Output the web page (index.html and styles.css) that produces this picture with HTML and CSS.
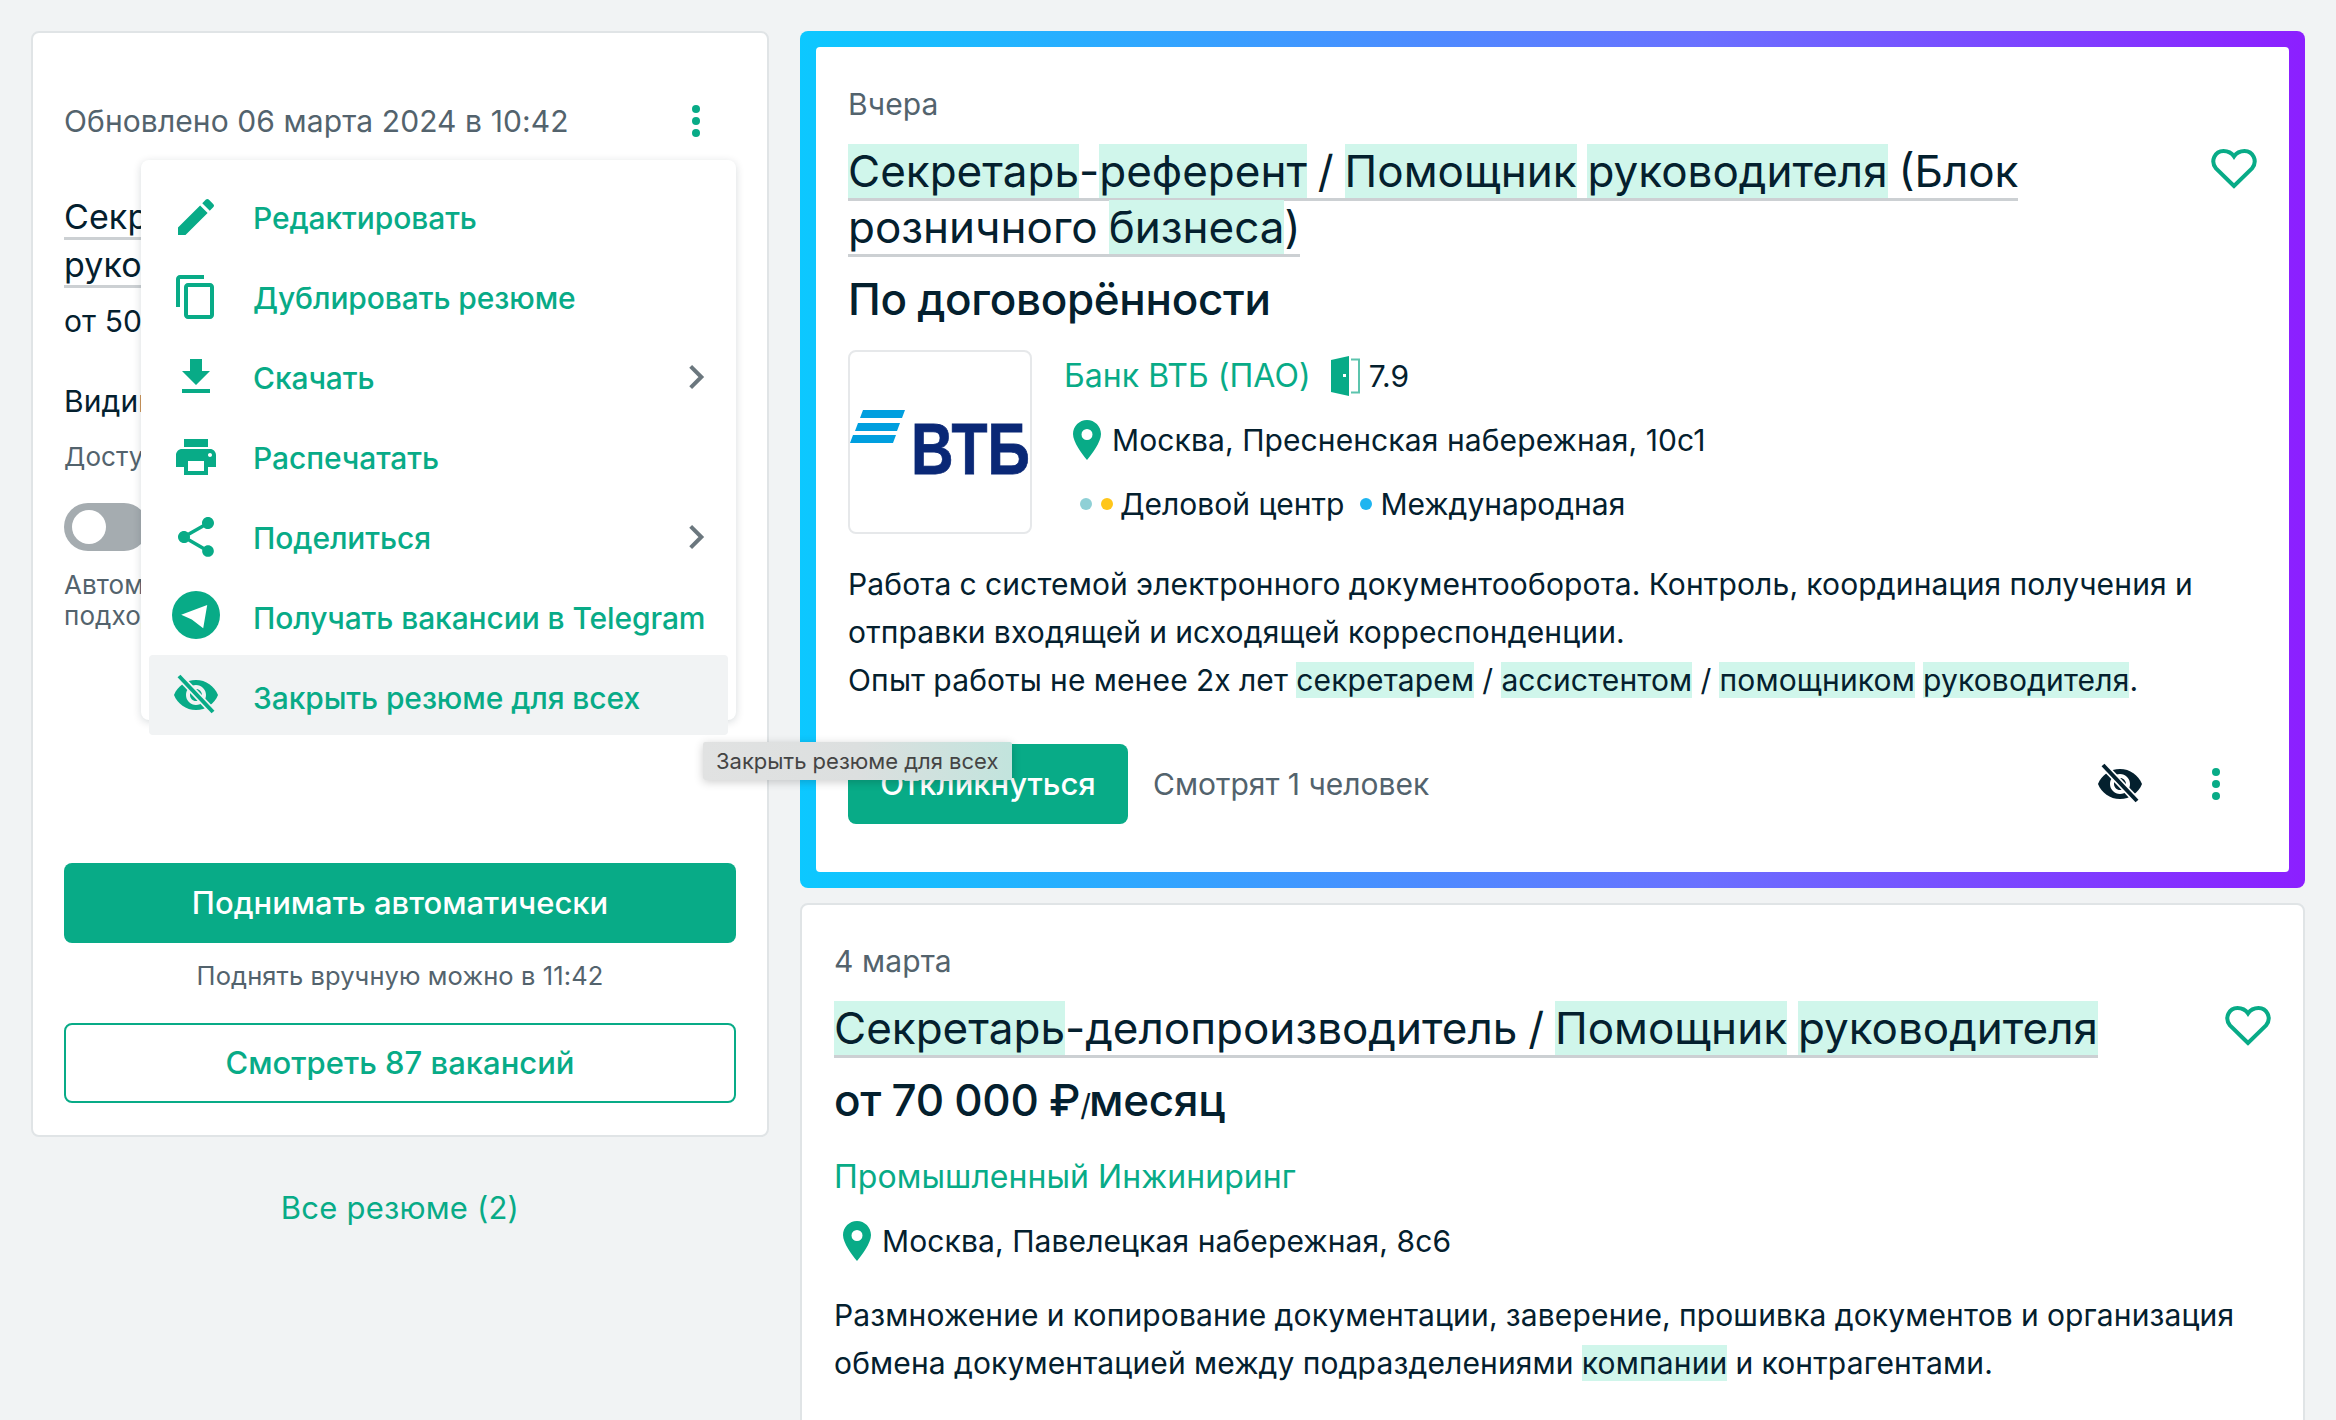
FILE: index.html
```html
<!DOCTYPE html>
<html lang="ru">
<head>
<meta charset="UTF-8">
<title>Вакансии</title>
<link rel="stylesheet" href="styles.css">
</head>
<body>
<div class="page">
    <div class="side">
        <div class="card resume">
            <div class="updated">
                <span>Обновлено 06 марта 2024 в 10:42</span>
                <svg class="dots" viewBox="0 0 8 32"><circle cx="4" cy="4" r="4"/><circle cx="4" cy="16" r="4"/><circle cx="4" cy="28" r="4"/></svg>
            </div>
            <a class="resume-title"><u>Секретарь-референт / Помощник</u> <u>руководителя</u></a>
            <div class="resume-salary">от 50 000 ₽/месяц</div>
            <div class="resume-vis">Видимость резюме</div>
            <div class="resume-note">Доступно всем</div>
            <div class="toggle"><i></i></div>
            <div class="resume-auto">Автоматически поднимать<br>подходящие резюме</div>
            <a class="btn btn-fill">Поднимать автоматически</a>
            <div class="raise-note">Поднять вручную можно в 11:42</div>
            <a class="btn btn-line">Смотреть 87 вакансий</a>

            <ul class="menu">
                <li>
                    <svg viewBox="0 0 24 24"><path d="M3 17.25V21h3.75L17.81 9.94l-3.75-3.75L3 17.25zM20.71 7.04a1 1 0 000-1.41l-2.34-2.34a1 1 0 00-1.41 0l-1.83 1.83 3.75 3.75 1.83-1.83z"/></svg>
                    <span>Редактировать</span>
                </li>
                <li>
                    <svg viewBox="0 0 24 24"><path d="M16 1H4c-1.1 0-2 .9-2 2v14h2V3h12V1zm3 4H8c-1.1 0-2 .9-2 2v14c0 1.1.9 2 2 2h11c1.1 0 2-.9 2-2V7c0-1.1-.9-2-2-2zm0 16H8V7h11v14z"/></svg>
                    <span>Дублировать резюме</span>
                </li>
                <li>
                    <svg viewBox="0 0 24 24"><path d="M19 9h-4V3H9v6H5l7 7 7-7zM5 18v2h14v-2H5z"/></svg>
                    <span>Скачать</span>
                    <svg class="chev" viewBox="0 0 24 24"><path d="M8 4l8 8-8 8"/></svg>
                </li>
                <li>
                    <svg viewBox="0 0 24 24"><path d="M19 8H5c-1.66 0-3 1.34-3 3v6h4v4h12v-4h4v-6c0-1.66-1.34-3-3-3zm-3 11H8v-5h8v5zm3-7c-.55 0-1-.45-1-1s.45-1 1-1 1 .45 1 1-.45 1-1 1zm-1-9H6v4h12V3z"/></svg>
                    <span>Распечатать</span>
                </li>
                <li>
                    <svg viewBox="0 0 24 24"><path d="M18 16.08c-.76 0-1.44.3-1.96.77L8.91 12.7c.05-.23.09-.46.09-.7s-.04-.47-.09-.7l7.05-4.11c.54.5 1.25.81 2.04.81 1.66 0 3-1.34 3-3s-1.34-3-3-3-3 1.34-3 3c0 .24.04.47.09.7L8.04 9.81C7.5 9.31 6.79 9 6 9c-1.66 0-3 1.34-3 3s1.34 3 3 3c.79 0 1.5-.31 2.04-.81l7.12 4.16c-.05.21-.08.43-.08.65 0 1.61 1.31 2.92 2.92 2.92s2.92-1.31 2.92-2.92-1.31-2.92-2.92-2.92z"/></svg>
                    <span>Поделиться</span>
                    <svg class="chev" viewBox="0 0 24 24"><path d="M8 4l8 8-8 8"/></svg>
                </li>
                <li class="tg">
                    <svg viewBox="0 0 24 24"><circle cx="12" cy="12" r="12"/><path class="plane" d="M17.6 7L4.600 11.900l5.300 2.300 5.700 4.400z"/></svg>
                    <span>Получать вакансии в Telegram</span>
                </li>
                <li class="active">
                    <svg viewBox="0 0 24 24"><path d="M12 4.500C7 4.500 2.730 7.610 1 12c1.730 4.390 6 7.500 11 7.500s9.270-3.110 11-7.500c-1.730-4.390-6-7.500-11-7.500zM12 17c-2.760 0-5-2.240-5-5s2.240-5 5-5 5 2.240 5 5-2.240 5-5 5zm0-8c-1.660 0-3 1.340-3 3s1.340 3 3 3 3-1.340 3-3-1.340-3-3-3z"/><path class="slash-bg" d="M3.500 2.500l17 18"/><path class="slash" d="M3.500 2.500l17 18"/></svg>
                    <span>Закрыть резюме для всех</span>
                </li>
            </ul>
        </div>
        <a class="all-link">Все резюме (2)</a>
    </div>

    <div class="list">
        <div class="vac-hot">
            <div class="vac">
                <div class="date">Вчера</div>
                <svg class="heart" viewBox="0 0 46 41"><path d="M23 38L5 20.500C-1 13 4 3 12.500 3 17 3 21 5.500 23 8.500 25 5.500 29 3 33.500 3 42 3 47 13 41 20.500z"/></svg>
                <div class="vac-title"><a><b>Секретарь</b>-<b>референт</b> / <b>Помощник</b> <b>руководителя</b> (Блок розничного <b>бизнеса</b>)</a></div>
                <div class="salary">По договорённости</div>
                <div class="company-row">
                    <div class="logo">
                        <svg viewBox="0 0 180 180">
                            <path class="vtb-bar" d="M13 58h42l-3 8H10zM8 71h42l-3 8H5zM3 83h43l-3 8H0z"/>
                            <text class="vtb-text" x="61" y="122" textLength="119" lengthAdjust="spacingAndGlyphs">ВТБ</text>
                        </svg>
                    </div>
                    <div class="company-info">
                        <div class="company">
                            <a>Банк ВТБ (ПАО)</a>
                            <svg class="door" viewBox="0 0 29 40"><path class="door-leaf" fill-rule="evenodd" d="M0 4L18 0v40L0 36zM12 18h3v3h-3z"/><path class="door-frame" d="M20 3.500h8v33h-8"/></svg>
                            <span>7.9</span>
                        </div>
                        <div class="place">
                            <svg class="pin" viewBox="0 0 28 40"><path fill-rule="evenodd" d="M14 0C6.300 0 0 6.300 0 14c0 8 9 20 14 26 5-6 14-18 14-26C28 6.300 21.700 0 14 0zm0 9a5.500 5.500 0 110 11 5.500 5.500 0 010-11z"/></svg>
                            <span>Москва, Пресненская набережная, 10с1</span>
                        </div>
                        <div class="metro">
                            <i class="m1"></i><i class="m2"></i><span>Деловой центр</span>
                            <i class="m3"></i><span>Международная</span>
                        </div>
                    </div>
                </div>
                <div class="desc">Работа с системой электронного документооборота. Контроль, координация получения и отправки входящей и исходящей корреспонденции.<br>Опыт работы не менее 2х лет <b>секретарем</b> / <b>ассистентом</b> / <b>помощником</b> <b>руководителя</b>.</div>
                <div class="actions">
                    <a class="btn btn-fill btn-reply">Откликнуться</a>
                    <span class="watch">Смотрят 1 человек</span>
                    <svg class="eye" viewBox="0 0 24 24"><path d="M12 4.500C7 4.500 2.730 7.610 1 12c1.730 4.390 6 7.500 11 7.500s9.270-3.110 11-7.500c-1.730-4.390-6-7.500-11-7.500zM12 17c-2.760 0-5-2.240-5-5s2.240-5 5-5 5 2.240 5 5-2.240 5-5 5zm0-8c-1.660 0-3 1.340-3 3s1.340 3 3 3 3-1.340 3-3-1.340-3-3-3z"/><path class="eye-bg" d="M3.500 2.500l17 18"/><path class="eye-slash" d="M3.500 2.500l17 18"/></svg>
                    <svg class="dots" viewBox="0 0 8 32"><circle cx="4" cy="4" r="4"/><circle cx="4" cy="16" r="4"/><circle cx="4" cy="28" r="4"/></svg>
                </div>
            </div>
        </div>

        <div class="card vac vac-plain">
            <div class="date">4 марта</div>
            <svg class="heart" viewBox="0 0 46 41"><path d="M23 38L5 20.500C-1 13 4 3 12.500 3 17 3 21 5.500 23 8.500 25 5.500 29 3 33.500 3 42 3 47 13 41 20.500z"/></svg>
            <div class="vac-title"><a><b>Секретарь</b>-делопроизводитель / <b>Помощник</b> <b>руководителя</b></a></div>
            <div class="salary">от 70 000 ₽<small>/</small>месяц</div>
            <a class="company-plain">Промышленный Инжиниринг</a>
            <div class="place">
                <svg class="pin" viewBox="0 0 28 40"><path fill-rule="evenodd" d="M14 0C6.300 0 0 6.300 0 14c0 8 9 20 14 26 5-6 14-18 14-26C28 6.300 21.700 0 14 0zm0 9a5.500 5.500 0 110 11 5.500 5.500 0 010-11z"/></svg>
                <span>Москва, Павелецкая набережная, 8с6</span>
            </div>
            <div class="desc">Размножение и копирование документации, заверение, прошивка документов и организация обмена документацией между подразделениями <b>компании</b> и контрагентами.</div>
        </div>
    </div>
</div>
<div class="tip">Закрыть резюме для всех</div>
</body>
</html>
```

FILE: styles.css
```css
*{
    margin:0;
    padding:0;
    box-sizing:border-box;
    list-style:none;
}
html,body{
    height:1420px;
    overflow:hidden;
}
body{
    position:relative;
    background:#f1f3f4;
    color:#04202e;
    font-family:Inter,"Noto Sans",sans-serif;
    font-size:30px;
    line-height:48px;
    letter-spacing:.1px;
}
.page{
    display:flex;
    gap:31px;
    height:1420px;
    overflow:hidden;
    padding:31px 31px 0;
}
.side{
    width:738px;
    flex:none;
}
.list{
    flex:1;
    display:flex;
    flex-direction:column;
    gap:15px;
}
.card{
    background:#fff;
    border:2px solid #e0e4e6;
    border-radius:8px;
}
svg{
    display:block;
    flex:none;
}
.dots{
    width:8px;
    height:32px;
    fill:#08ab87;
}

/* левая карточка */
.resume{
    position:relative;
    height:1106px;
    padding:64px 31px 0;
}
.updated{
    display:flex;
    justify-content:space-between;
    align-items:center;
    padding-right:36px;
    color:#53636d;
    height:48px;
}
.resume-title{
    display:block;
    margin-top:48px;
    font-size:34px;
}
.resume-title u{
    text-decoration:none;
    border-bottom:3px solid #ccd0d3;
}
.resume-salary{
    margin-top:8px;
}
.resume-vis{
    margin-top:32px;
}
.resume-note{
    margin-top:8px;
    font-size:26px;
    color:#53636d;
}
.toggle{
    width:84px;
    height:48px;
    margin-top:22px;
    background:#a5acb0;
    border-radius:24px;
    padding:7px 8px;
}
.toggle i{
    display:block;
    width:34px;
    height:34px;
    border-radius:50%;
    background:#fff;
}
.resume-auto{
    margin-top:18px;
    font-size:26px;
    line-height:31px;
    color:#53636d;
}
.btn{
    display:flex;
    align-items:center;
    justify-content:center;
    height:80px;
    border-radius:8px;
    font-size:31px;
    font-weight:500;
    letter-spacing:0;
}
.btn-fill{
    background:#08ab87;
    color:#fff;
}
.btn-line{
    border:2px solid #08ab87;
    color:#08ab87;
}
.resume .btn-fill{
    margin-top:232px;
}
.raise-note{
    margin-top:13px;
    margin-bottom:27px;
    line-height:40px;
    font-size:25.500px;
    text-align:center;
    color:#53636d;
}
.all-link{
    display:block;
    margin-top:47px;
    text-align:center;
    color:#08ab87;
    font-size:31px;
    letter-spacing:.2px;
}

/* выпадающее меню */
.menu{
    position:absolute;
    left:108px;
    top:127px;
    width:595px;
    height:560px;
    padding-top:18px;
    background:#fff;
    border-radius:8px;
    box-shadow:0 2px 8px rgba(4,32,46,.16);
}
.menu li{
    display:flex;
    align-items:center;
    gap:33px;
    height:80px;
    padding:0 24px 0 31px;
    color:#08ab87;
    font-weight:500;
    letter-spacing:-.1px;
}
.menu li svg{
    width:48px;
    height:48px;
    margin-bottom:3px;
    fill:#08ab87;
}
.menu li.tg svg,.menu li.active svg{
    margin-bottom:7px;
}
.menu li .chev{
    width:32px;
    height:32px;
    margin-left:auto;
    fill:none;
    stroke:#6b777e;
    stroke-width:3;
}
.menu .plane{
    fill:#fff;
}
.menu .active{
    width:579px;
    margin-top:-3px;
    margin-left:8px;
    padding-top:6px;
    padding-left:23px;
    background:#f1f3f4;
    border-radius:4px;
}
.menu li .slash{
    fill:none;
    stroke:#08ab87;
    stroke-width:2;
}
.menu li .slash-bg{
    fill:none;
    stroke:#f1f3f4;
    stroke-width:3.6;
}

/* вакансии */
.vac-hot{
    padding:16px;
    border-radius:8px;
    background:linear-gradient(90deg,#0cc8ff 0%,#6a70ff 60%,#8c1fff 100%);
}
.vac{
    position:relative;
    background:#fff;
    border-radius:4px;
    height:825px;
    padding:33px 32px 0;
}
.vac-plain{
    border-radius:8px;
    height:640px;
    flex:none;
    padding-top:32px;
}
.date{
    color:#53636d;
}
.heart{
    position:absolute;
    right:32px;
    top:101px;
    width:46px;
    height:41px;
    fill:none;
    stroke:#08ab87;
    stroke-width:4;
}
.vac-plain .heart{
    top:100px;
}
.vac-title{
    margin-top:15px;
    padding-right:80px;
    font-size:44px;
    line-height:56px;
    letter-spacing:0;
    word-spacing:-1.500px;
}
.vac-title a{
    border-bottom:3px solid #ccd0d3;
}
.vac-title b,.desc b{
    font-weight:400;
    background:#d0f6eb;
}
.salary{
    margin-top:16px;
    font-size:44px;
    line-height:56px;
    font-weight:500;
    letter-spacing:-.3px;
    word-spacing:-1px;
}
.salary small{
    font-size:30px;
    font-weight:400;
    letter-spacing:-2px;
}
.company-row{
    display:flex;
    gap:32px;
    margin-top:23px;
}
.logo{
    width:184px;
    height:184px;
    border:2px solid #e6e8ea;
    border-radius:8px;
    flex:none;
}
.logo svg{
    width:180px;
    height:180px;
}
.vtb-bar{
    fill:#009fdf;
}
.vtb-text{
    font-family:"Liberation Sans",sans-serif;
    font-size:73px;
    font-weight:700;
    fill:#0a2876;
    stroke:#0a2876;
    stroke-width:.8;
}
.company-info{
    flex:1;
    padding-top:2px;
}
.company{
    display:flex;
    align-items:center;
    height:48px;
    gap:20px;
}
.company a,.company-plain{
    color:#08ab87;
    font-size:32px;
    letter-spacing:.05px;
}
.door{
    width:29px;
    height:40px;
    margin-right:-11px;
}
.door-leaf{
    fill:#08ab87;
}
.door-frame{
    fill:none;
    stroke:#5cc4ad;
    stroke-width:2;
}
.place{
    display:flex;
    align-items:center;
    gap:11px;
    height:48px;
    margin-top:16px;
    padding-left:9px;
}
.pin{
    width:28px;
    height:40px;
    fill:#08ab87;
}
.metro{
    display:flex;
    align-items:center;
    height:48px;
    margin-top:16px;
    padding-left:16px;
    letter-spacing:0;
}
.metro i{
    width:12px;
    height:12px;
    border-radius:50%;
    margin-right:9px;
}
.metro span{
    margin-right:16px;
}
.metro .m1{
    background:#8fd0d6;
}
.metro .m2{
    background:#ffc61a;
    margin-right:7px;
}
.metro .m3{
    background:#1fb5f0;
    margin-right:8px;
}
.desc{
    margin-top:26px;
    letter-spacing:.15px;
    word-spacing:-.5px;
}
.actions{
    display:flex;
    align-items:center;
    margin-top:40px;
}
.btn-reply{
    width:280px;
}
.watch{
    margin-left:25px;
    color:#53636d;
    letter-spacing:0;
}
.eye{
    width:48px;
    height:48px;
    margin-left:auto;
    fill:#04202e;
}
.eye-bg{
    fill:none;
    stroke:#fff;
    stroke-width:3.6;
}
.eye-slash{
    fill:none;
    stroke:#04202e;
    stroke-width:2;
}
.actions .dots{
    margin-left:68px;
    margin-right:37px;
}
.company-plain{
    display:block;
    margin-top:20px;
}
.vac-plain .place{
    margin-top:16px;
}

.tip{
    position:absolute;
    left:703px;
    top:742px;
    width:309px;
    height:38px;
    padding-left:13px;
    font-size:22px;
    line-height:38px;
    letter-spacing:0;
    color:#444;
    border-radius:2px;
    background:linear-gradient(90deg,#e1e2e2 0%,#dcdfdf 50%,#c2e4dd 100%);
    box-shadow:0 2px 10px rgba(0,0,0,.2);
}
```
